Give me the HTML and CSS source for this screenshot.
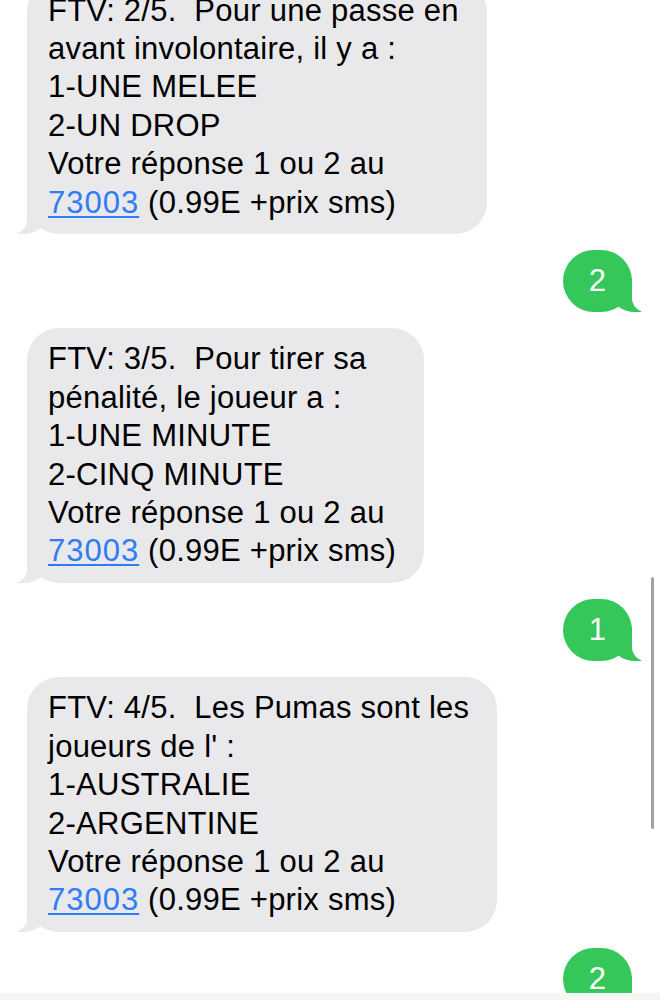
FILE: index.html
```html
<!DOCTYPE html>
<html lang="fr">
<head>
<meta charset="utf-8">
<title>Messages</title>
<link rel="stylesheet" href="styles.css">
</head>
<body>
<main class="thread">
  <div class="bubble in">FTV: 2/5.&nbsp; Pour une passe en<br>avant involontaire, il y a :<br>1-UNE MELEE<br>2-UN DROP<br>Votre réponse 1 ou 2 au<br><a class="link" href="#">73003</a> (0.99E +prix sms)</div>
  <div class="bubble out">2</div>
  <div class="bubble in">FTV: 3/5.&nbsp; Pour tirer sa<br>pénalité, le joueur a :<br>1-UNE MINUTE<br>2-CINQ MINUTE<br>Votre réponse 1 ou 2 au<br><a class="link" href="#">73003</a> (0.99E +prix sms)</div>
  <div class="bubble out">1</div>
  <div class="bubble in">FTV: 4/5.&nbsp; Les Pumas sont les<br>joueurs de l' :<br>1-AUSTRALIE<br>2-ARGENTINE<br>Votre réponse 1 ou 2 au<br><a class="link" href="#">73003</a> (0.99E +prix sms)</div>
  <div class="bubble out">2</div>
</main>
<div class="scrollbar"></div>
<div class="bottom-bar"></div>
</body>
</html>
```
FILE: styles.css
```css
html, body {
  margin: 0;
  padding: 0;
  background: #ffffff;
  overflow: hidden;
}

body {
  width: 660px;
  height: 1000px;
  font-family: "Liberation Sans", Arial, sans-serif;
  font-size: 31px;
  line-height: 38.4px;
  color: #000000;
}

.thread {
  display: flex;
  flex-direction: column;
  gap: 16px;
  margin-top: -20.4px;
}

.bubble {
  position: relative;
  width: fit-content;
  border-radius: 32px;
  padding: 12px 28px 12px 21px;
  letter-spacing: 0.25px;
}

.bubble::before,
.bubble::after {
  content: "";
  position: absolute;
  bottom: 0;
  height: 34px;
}

.in {
  align-self: flex-start;
  margin-left: 27px;
  background: #e9e9eb;
}

.in::before {
  left: -10px;
  width: 30px;
  background: #e9e9eb;
  border-bottom-right-radius: 24px 20px;
}

.in::after {
  left: -36px;
  width: 36px;
  background: #ffffff;
  border-bottom-right-radius: 14px;
}

.out {
  align-self: flex-end;
  margin-right: 28px;
  background: #35c759;
  color: #ffffff;
  padding: 12px 26px;
  border-radius: 31px;
  letter-spacing: 0;
}

.out::before {
  right: -9px;
  width: 30px;
  background: #35c759;
  border-bottom-left-radius: 24px 20px;
}

.out::after {
  right: -36px;
  width: 36px;
  background: #ffffff;
  border-bottom-left-radius: 14px;
}

.link {
  color: #2f7cf6;
  letter-spacing: 1px;
  text-decoration: underline;
  text-decoration-thickness: 2px;
  text-underline-offset: 3px;
}

.scrollbar {
  position: fixed;
  left: 651px;
  top: 577px;
  width: 3px;
  height: 252px;
  border-radius: 2px;
  background: #a3a3a3;
}

.bottom-bar {
  position: fixed;
  left: 0;
  right: 0;
  bottom: 0;
  height: 7px;
  background: #f4f7f4;
}
```
